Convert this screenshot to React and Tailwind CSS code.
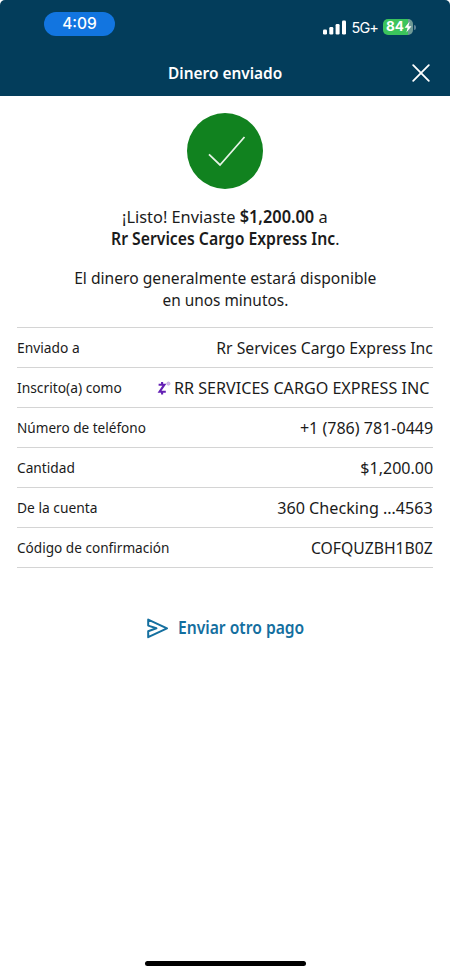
import React from "react";

const rows = [
  { label: "Enviado a", value: "Rr Services Cargo Express Inc", l: "scale-x-[0.92]", v: "scale-x-[0.926]" },
  { label: "Inscrito(a) como", value: "RR SERVICES CARGO EXPRESS INC", zelle: true, l: "scale-x-[0.92]", v: "scale-x-[0.948]" },
  { label: "Número de teléfono", value: "+1 (786) 781-0449", l: "scale-x-[0.905]", v: "scale-x-[0.944]" },
  { label: "Cantidad", value: "$1,200.00", l: "scale-x-[0.915]", v: "scale-x-[0.944]" },
  { label: "De la cuenta", value: "360 Checking …4563", l: "scale-x-[0.92]", v: "scale-x-[0.95]" },
  { label: "Código de confirmación", value: "COFQUZBH1B0Z", l: "scale-x-[0.907]", v: "scale-x-[0.925]" },
];

function StatusBar() {
  return (
    <div className="flex h-[46px] items-start justify-between pl-[44px] pr-[34px] pt-3 font-['Inter',sans-serif] text-white">
      <div className="flex h-6 w-[71px] items-center justify-center rounded-full bg-[#1275e0] text-[15.5px] font-medium leading-6">
        4:09
      </div>
      <div className="flex h-[30px] items-center">
        <svg className="mr-[5px] h-[15px] w-[23px]" viewBox="0 0 23 15" fill="#fff">
          <rect x="0" y="9.5" width="4" height="5" rx="1.2" />
          <rect x="6.3" y="7" width="4" height="7.5" rx="1.2" />
          <rect x="12.6" y="4" width="4" height="10.5" rx="1.2" />
          <rect x="19" y="0.5" width="4" height="14" rx="1.2" />
        </svg>
        <span className="pt-0.5 text-[14.5px] leading-none tracking-[-0.9px]">5G+</span>
        <div className="ml-[5px] flex h-4 w-[30px] items-center rounded-[5px] bg-[linear-gradient(90deg,#3cc45c_84%,#6f9a96_84%)] pl-[3px] text-[13.5px] font-bold leading-none">
          84
          <svg className="h-3 w-2" viewBox="0 0 8 12" fill="#fff">
            <path d="M5.6 0.5 0.6 6.8H3.6L2.4 11.5 7.5 5.2H4.5Z" />
          </svg>
        </div>
        <div className="ml-px h-[5px] w-[2px] rounded-r-full bg-[#5f8296]" />
      </div>
    </div>
  );
}

function ZelleMark() {
  return (
    <svg className="-mr-[11px] h-[15px] w-[14px] shrink-0" viewBox="0 0 14 15" fill="none">
      <path d="M1.6 3.7H7.4L2.6 10.7H8.8M5.1 1V3.6M5.1 10.8V13.6" stroke="#6420b4" strokeWidth="2.1" />
      <circle cx="11.4" cy="2.6" r="1.6" fill="#d3bdea" stroke="#bb9bdc" strokeWidth="0.7" />
    </svg>
  );
}

export default function App() {
  return (
    <div className="flex h-[975px] w-[450px] flex-col bg-white font-['Noto_Sans',sans-serif] text-[#1b1b1b]">
      <header className="h-24 rounded-t-[5px] bg-[#033d5b]">
        <StatusBar />
        <div className="grid h-[54px] grid-cols-[1fr_auto_1fr] items-center">
          <span />
          <h1 className="scale-x-[0.934] text-[16.5px] font-semibold leading-5 text-white">Dinero enviado</h1>
          <svg className="mr-5 h-[18px] w-[18px] justify-self-end" viewBox="0 0 18 18" fill="none" stroke="#fff" strokeWidth="1.8" strokeLinecap="round">
            <path d="M1.2 1.2 16.8 16.8M16.8 1.2 1.2 16.8" />
          </svg>
        </div>
      </header>

      <main className="flex flex-col items-center px-[17px] pt-[17px]">
        <svg className="h-19 w-19" viewBox="0 0 76 76" fill="none">
          <circle cx="38" cy="38" r="38" fill="#11821f" />
          <path d="M22 41.3 33 52 57.5 24" stroke="#e6f3e6" strokeWidth="1.8" />
        </svg>

        <p className="mt-[17px] flex flex-col items-center text-[17px] leading-[22px]">
          <span className="scale-x-[0.962]">¡Listo! Enviaste <b className="font-semibold">$1,200.00</b> a</span>
          <span className="scale-x-[0.927]"><b className="font-semibold">Rr Services Cargo Express Inc</b>.</span>
        </p>
        <p className="mt-[17px] flex flex-col items-center text-[17px] leading-[22px]">
          <span className="scale-x-[0.92]">El dinero generalmente estará disponible</span>
          <span className="scale-x-[0.906]">en unos minutos.</span>
        </p>

        <dl className="mt-4 w-full border-t border-[#d4d4d4]">
          {rows.map((r) => (
            <div key={r.label} className="flex h-10 items-center justify-between whitespace-nowrap border-b border-[#d4d4d4]">
              <dt className={"origin-left text-[15px] " + r.l}>{r.label}</dt>
              <dd className={"flex items-center pt-px text-[17px] " + (r.zelle ? "pr-1" : "")}>
                {r.zelle && <ZelleMark />}
                <span className={"inline-block origin-right " + r.v}>{r.value}</span>
              </dd>
            </div>
          ))}
        </dl>

        <button className="mt-[49px] flex items-center pl-[2px] text-[#146f9f]">
          <svg className="mr-[10px] h-[21px] w-[21px]" viewBox="0 0 21 21" fill="none" stroke="currentColor" strokeWidth="2" strokeLinejoin="round" strokeLinecap="round">
            <path d="M1.2 1.6 20 10.3 1.2 19.2V13.2L9.4 10.3 1.2 7.6Z" />
          </svg>
          <span className="-mr-[11px] origin-left scale-x-[0.92] text-[17px] font-semibold leading-[22px]">Enviar otro pago</span>
        </button>
      </main>

      <div className="mb-[9px] mt-auto h-[5px] w-[161px] self-center rounded-full bg-black" />
    </div>
  );
}
